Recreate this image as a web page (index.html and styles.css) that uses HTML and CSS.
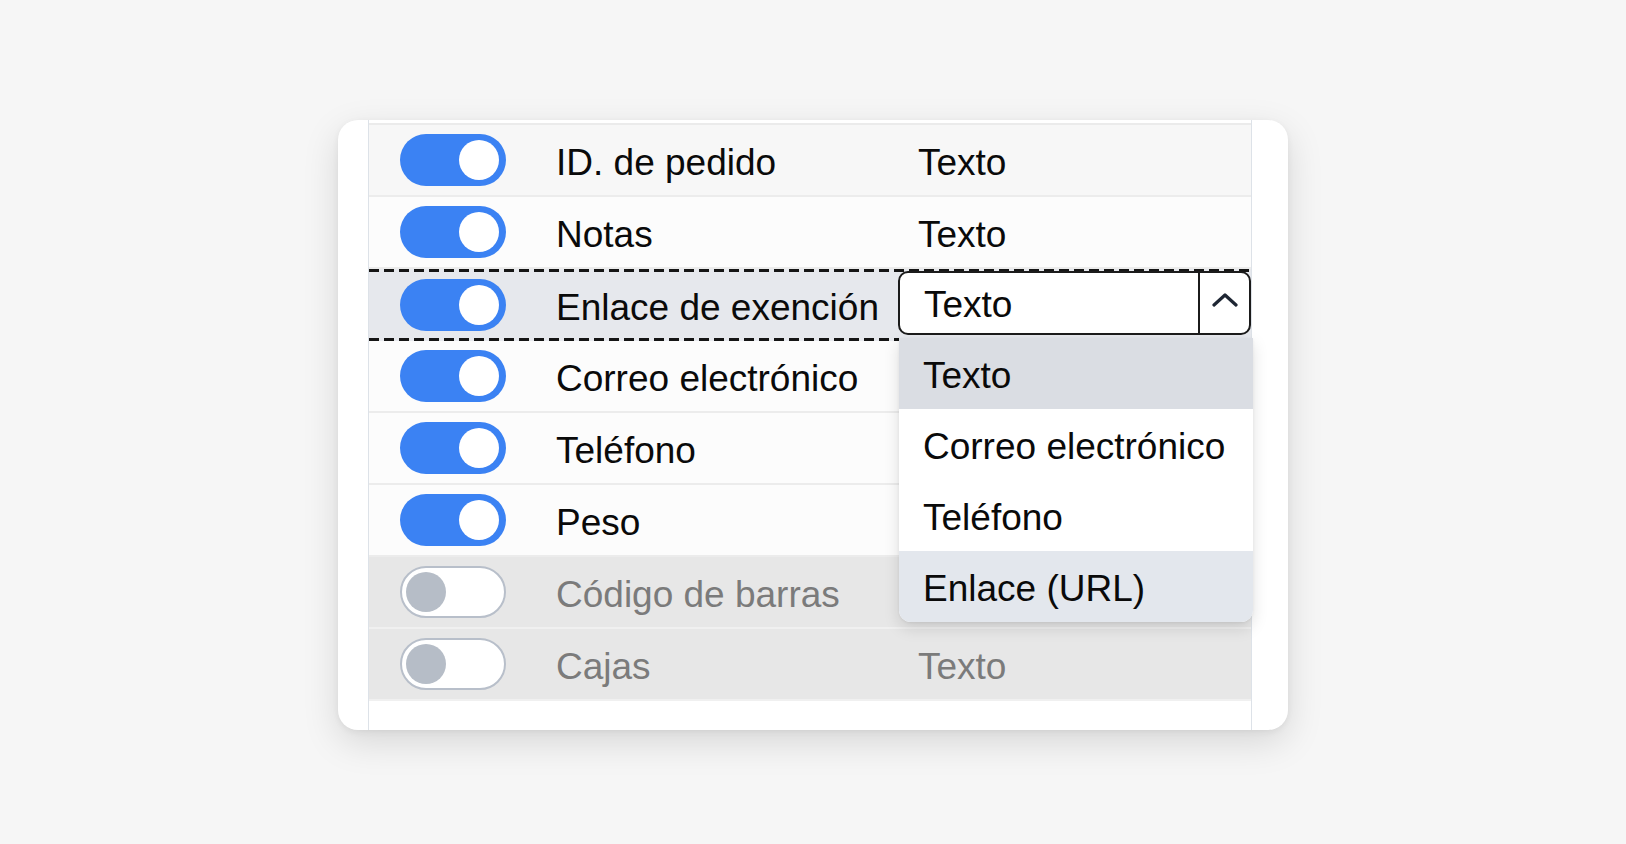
FILE: index.html
```html
<!DOCTYPE html>
<html lang="es">
<head>
<meta charset="utf-8">
<title>Campos</title>
<link rel="stylesheet" href="styles.css">
</head>
<body>
<div class="card">
  <div class="table">
    <div class="table-top"></div>
    <div class="row row-first">
      <span class="toggle on"><span class="knob"></span></span>
      <span class="label">ID. de pedido</span>
      <span class="type">Texto</span>
    </div>
    <div class="row">
      <span class="toggle on"><span class="knob"></span></span>
      <span class="label">Notas</span>
      <span class="type">Texto</span>
    </div>
    <div class="row row-drag">
      <span class="toggle on"><span class="knob"></span></span>
      <span class="label">Enlace de exención</span>
      <div class="select-wrap">
        <div class="select">
          <span class="select-value">Texto</span>
          <span class="select-btn">
            <svg width="26" height="14" viewBox="0 0 26 14"><polyline points="2,12 13,2 24,12" fill="none" stroke="#1e2633" stroke-width="3.2" stroke-linecap="round" stroke-linejoin="round"/></svg>
          </span>
        </div>
        <ul class="menu">
          <li class="opt opt-active">Texto</li>
          <li class="opt">Correo electrónico</li>
          <li class="opt">Teléfono</li>
          <li class="opt opt-hover">Enlace (URL)</li>
        </ul>
      </div>
    </div>
    <div class="row">
      <span class="toggle on"><span class="knob"></span></span>
      <span class="label">Correo electrónico</span>
      <span class="type"></span>
    </div>
    <div class="row">
      <span class="toggle on"><span class="knob"></span></span>
      <span class="label">Teléfono</span>
      <span class="type"></span>
    </div>
    <div class="row">
      <span class="toggle on"><span class="knob"></span></span>
      <span class="label">Peso</span>
      <span class="type"></span>
    </div>
    <div class="row row-off">
      <span class="toggle off"><span class="knob"></span></span>
      <span class="label">Código de barras</span>
      <span class="type"></span>
    </div>
    <div class="row row-off">
      <span class="toggle off"><span class="knob"></span></span>
      <span class="label">Cajas</span>
      <span class="type">Texto</span>
    </div>
  </div>
</div>
</body>
</html>
```
FILE: styles.css
```css
html, body {
  margin: 0;
  padding: 0;
  background: #f6f6f6;
  font-family: "Liberation Sans", Arial, sans-serif;
}
body {
  height: 844px;
  overflow: hidden;
}
.card {
  width: 950px;
  height: 610px;
  margin: 120px auto 0;
  background: #ffffff;
  border-radius: 20px;
  box-shadow: 0 12px 36px rgba(0,0,0,0.13), 0 2px 6px rgba(0,0,0,0.06);
  padding-left: 30px;
  box-sizing: border-box;
}
.table {
  width: 884px;
  height: 610px;
  border-left: 1px solid #dde2e8;
  border-right: 1px solid #dde2e8;
  box-sizing: border-box;
  background: #ffffff;
}
.table-top {
  height: 3px;
  border-bottom: 2px solid #ebebeb;
}
.row {
  height: 70px;
  border-bottom: 2px solid #ececec;
  background: #fcfcfc;
  display: grid;
  grid-template-columns: 106px 392px 353px;
  align-items: center;
  padding-left: 31px;
  font-size: 37px;
  color: #0a0a0a;
  position: relative;
}
.row > * { min-width: 0; }
.row-first { background: #f7f7f7; }
.label {
  white-space: nowrap;
  padding-left: 50px;
  padding-top: 5px;
}
.type {
  padding-left: 20px;
  padding-top: 5px;
  white-space: nowrap;
}
.row-drag {
  height: 72px;
  border-bottom: none;
  background:
    repeating-linear-gradient(to right, #151515 0 10px, transparent 10px 15px) left top / 100% 3px no-repeat,
    repeating-linear-gradient(to right, #151515 0 10px, transparent 10px 15px) left bottom / 100% 3px no-repeat,
    #e6e8ed;
  z-index: 2;
}
.row-off {
  background: #e7e7e7;
  border-bottom: 2px solid #f0f0f0;
  color: #7b7b7b;
}
.toggle {
  width: 106px;
  height: 52px;
  border-radius: 26px;
  box-sizing: border-box;
  display: flex;
  align-items: center;
  padding: 0 7px 0 6px;
}
.toggle.on {
  background: #3b82f3;
  justify-content: flex-end;
}
.toggle.off {
  background: #ffffff;
  border: 2px solid #b8bfca;
  padding: 0 4px;
  justify-content: flex-start;
}
.knob {
  width: 40px;
  height: 40px;
  border-radius: 50%;
  background: #ffffff;
}
.toggle.off .knob { background: #b6bdc7; }
.select-wrap {
  position: relative;
  height: 64px;
  margin-top: -4px;
}
.select {
  height: 64px;
  box-sizing: border-box;
  border: 2px solid #1b1b1b;
  border-radius: 10px;
  background: #ffffff;
  display: flex;
  align-items: stretch;
}
.select-value {
  flex: 1;
  padding-left: 24px;
  padding-top: 4px;
  display: flex;
  align-items: center;
  color: #0a0a0a;
}
.select-btn {
  width: 51px;
  border-left: 2px solid #1b1b1b;
  display: flex;
  align-items: center;
  justify-content: center;
  padding-bottom: 6px;
  box-sizing: border-box;
}
.menu {
  position: absolute;
  left: 1px;
  top: 67px;
  width: 354px;
  margin: 0;
  padding: 0;
  list-style: none;
  background: #ffffff;
  border-radius: 0 0 12px 12px;
  box-shadow: 0 6px 16px rgba(0,0,0,0.13), 0 1px 3px rgba(0,0,0,0.06);
  overflow: hidden;
  z-index: 5;
}
.opt {
  height: 71px;
  display: flex;
  align-items: center;
  padding-left: 24px;
  padding-top: 4px;
  box-sizing: border-box;
  font-size: 37px;
  color: #0a0a0a;
  white-space: nowrap;
}
.opt-active { background: #dadde3; }
.opt-hover { background: #e3e7ed; }
```
